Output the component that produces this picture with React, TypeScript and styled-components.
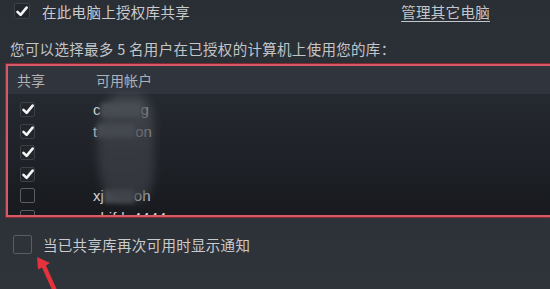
import React from 'react';
import styled, { createGlobalStyle } from 'styled-components';

const Global = createGlobalStyle`
  html, body {
    margin: 0;
    padding: 0;
    background: #2b2f36;
    overflow: hidden;
  }
  body {
    font-family: "Noto Sans CJK SC", "Noto Sans", "Liberation Sans", sans-serif;
    color: #c8cacd;
  }
`;

const Page = styled.div`
  position: relative;
  width: 550px;
  height: 289px;
  overflow: hidden;
  background: linear-gradient(180deg, #2a2e35 0%, #2c3037 60%, #2f333a 100%);
`;

const TopRow = styled.div`
  display: flex;
  align-items: center;
  justify-content: space-between;
  height: 20px;
  padding: 1px 60px 0 14px;
`;

const Label = styled.label<{ $gap?: number }>`
  display: flex;
  align-items: center;
  gap: ${(p) => p.$gap ?? 12}px;
  font-size: 14.5px;
  letter-spacing: 0.3px;
  color: #c9cbce;
`;

const Box = styled.span<{ $size: number; $checked?: boolean }>`
  display: inline-flex;
  align-items: center;
  justify-content: center;
  box-sizing: border-box;
  width: ${(p) => p.$size}px;
  height: ${(p) => p.$size}px;
  border-radius: 2px;
  border: 1.5px solid ${(p) => (p.$checked ? '#3c4047' : '#595d64')};
  background: ${(p) => (p.$checked ? '#22252a' : 'transparent')};
  flex: none;
`;

const ManageLink = styled.a`
  font-size: 14.5px;
  letter-spacing: 0.3px;
  color: #c3c6ca;
  text-decoration: underline;
  text-underline-offset: 3px;
`;

const Description = styled.p`
  margin: 18px 0 0 10px;
  font-size: 14.5px;
  letter-spacing: 0.3px;
  color: #c3c5c8;
  line-height: 20px;
`;

const ShareTable = styled.div`
  margin: 5px 0 0 6px;
  width: 560px;
  height: 153px;
  box-sizing: border-box;
  border: 2px solid #d65a66;
  box-shadow: 0 0 0 1px rgba(170, 40, 52, 0.75), inset 0 0 0 1px rgba(170, 40, 52, 0.6);
  overflow: hidden;
  display: flex;
  flex-direction: column;
`;

const HeaderRow = styled.div`
  display: flex;
  align-items: center;
  height: 28px;
  flex: none;
  background: #30353d;
  font-size: 14px;
  color: #aeb2b8;
`;

const ShareCol = styled.span`
  box-sizing: border-box;
  width: 88px;
  padding-left: 9px;
`;

const List = styled.div`
  position: relative;
  flex: 1;
  padding-top: 5px;
  background: linear-gradient(180deg, #252930 0%, #1e2127 50%, #16181c 100%);
`;

const Row = styled.div`
  display: flex;
  align-items: center;
  height: 21.5px;
  padding-left: 12px;
`;

const Name = styled.span`
  margin-left: 58px;
  font-family: "Liberation Sans", "Noto Sans", sans-serif;
  font-size: 15px;
  color: #d2d4d7;
  display: inline-flex;
  align-items: center;
`;

const Smudge = styled.span<{ $w: number }>`
  display: inline-block;
  width: ${(p) => p.$w}px;
  height: 14px;
  background: #4a4e55;
  filter: blur(2px);
`;

const BlurPatch = styled.div`
  position: absolute;
  left: 90px;
  top: 0;
  width: 56px;
  height: 108px;
  background: linear-gradient(180deg, #4c5057 0%, #3e4248 50%, #3a3e44 100%);
  border-radius: 40% 30% 30% 40%;
  filter: blur(5px);
  opacity: 0.75;
  pointer-events: none;
`;

const BottomRow = styled.div`
  display: flex;
  align-items: center;
  margin: 17px 0 0 13px;
`;

const Arrow = styled.svg`
  position: absolute;
  left: 33px;
  top: 254px;
`;

const Check = () => (
  <svg width="12" height="11" viewBox="0 0 12 11">
    <path d="M1.5 5.8 L4.6 8.9 L10.6 1.6" fill="none" stroke="#f4f5f6" strokeWidth="2.6" strokeLinecap="round" strokeLinejoin="round" />
  </svg>
);

type Account = { checked: boolean; name: React.ReactNode };

const accounts: Account[] = [
  { checked: true, name: (<>c<Smudge $w={40} />g</>) },
  { checked: true, name: (<>t<Smudge $w={38} />on</>) },
  { checked: true, name: null },
  { checked: true, name: null },
  { checked: false, name: (<>xj<Smudge $w={30} />oh</>) },
  { checked: false, name: 'zhifdn4444' },
];

const App: React.FC = () => (
  <Page>
    <Global />
    <TopRow>
      <Label>
        <Box $size={16} $checked>
          <Check />
        </Box>
        在此电脑上授权库共享
      </Label>
      <ManageLink>管理其它电脑</ManageLink>
    </TopRow>
    <Description>您可以选择最多 5 名用户在已授权的计算机上使用您的库：</Description>
    <ShareTable>
      <HeaderRow>
        <ShareCol>共享</ShareCol>
        <span>可用帐户</span>
      </HeaderRow>
      <List>
        {accounts.map((a, i) => (
          <Row key={i}>
            <Box $size={15} $checked={a.checked}>
              {a.checked && <Check />}
            </Box>
            <Name>{a.name}</Name>
          </Row>
        ))}
        <BlurPatch />
      </List>
    </ShareTable>
    <BottomRow>
      <Label $gap={11}>
        <Box $size={19} />
        当已共享库再次可用时显示通知
      </Label>
    </BottomRow>
    <Arrow width="28" height="38" viewBox="0 0 28 38">
      <path d="M4 3 L17 9 L13 11.5 L24 36 L19.5 37 L9 13.5 L5 15.5 Z" fill="#e5323c" />
    </Arrow>
  </Page>
);

export default App;
